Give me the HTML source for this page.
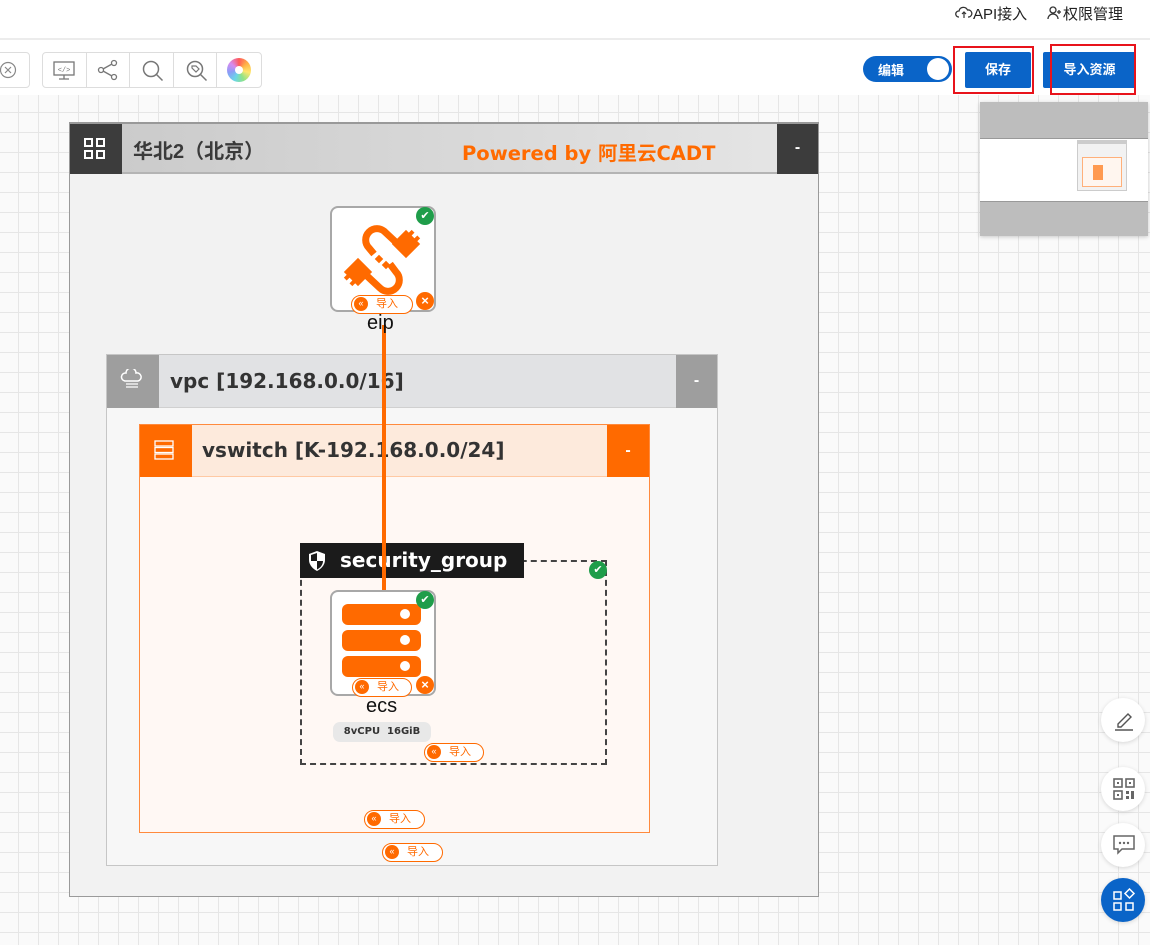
<!DOCTYPE html>
<html><head><meta charset="utf-8"><style>
*{box-sizing:border-box;margin:0;padding:0}
body{width:1150px;height:945px;overflow:hidden;position:relative;font-family:"Liberation Sans","Noto Sans CJK SC",sans-serif;background:#fff}
.abs{position:absolute}
.canvas{left:0;top:95px;width:1150px;height:850px;background-color:#fafafa;background-image:linear-gradient(#e6e6e6 1px,transparent 1px),linear-gradient(90deg,#e6e6e6 1px,transparent 1px);background-size:20px 20px;background-position:0 -3px,18px 0}
.vb{font-family:"DejaVu Sans","Noto Sans CJK SC",sans-serif;font-weight:bold}
.node{width:106px;height:106px;background:#fff;border:2px solid #a8a8a8;border-radius:8px}
.chk{width:18px;height:18px;border-radius:50%;background:#1f9d4a;color:#fff;font-size:11px;text-align:center;line-height:18px}
.xc{width:18px;height:18px;border-radius:50%;background:#ff6a00;color:#fff;font-size:13px;text-align:center;line-height:17px;font-weight:bold}
.pill{height:19px;border:1.5px solid #ff6a00;border-radius:10px;background:#fff;color:#ff6a00;font-size:11px;line-height:16px}
.pill i{position:absolute;left:2px;top:1px;width:14px;height:14px;border-radius:50%;background:#ff6a00;color:#fff;font-style:normal;font-size:9px;text-align:center;line-height:13px}
.pill span{position:absolute;left:24px;top:0}
.fb{width:44px;height:44px;border-radius:50%;background:#fff;box-shadow:0 1px 4px rgba(0,0,0,.15)}
.tb{width:44px;height:36px;border-right:1px solid #ddd}
</style></head><body>
<div class="abs" style="left:0;top:0;width:1150px;height:40px;background:#fff;border-bottom:2px solid #ececec"></div>
<div class="abs" style="left:955px;top:3px;font-size:15px;color:#222">
<svg width="18" height="14" viewBox="0 0 18 14" style="vertical-align:-1px"><path d="M4 11H3.5A3 3 0 0 1 4 5a4.5 4.5 0 0 1 8.5-1A3.5 3.5 0 0 1 14 11h-1" fill="none" stroke="#333" stroke-width="1.3"/><path d="M7 8l2-2 2 2M9 6v6" fill="none" stroke="#333" stroke-width="1.2"/></svg>API接入</div>
<div class="abs" style="left:1047px;top:3px;font-size:15px;color:#222">
<svg width="16" height="14" viewBox="0 0 16 14" style="vertical-align:-1px"><circle cx="6" cy="4" r="3" fill="none" stroke="#333" stroke-width="1.3"/><path d="M1 13a5 5 0 0 1 10 0M12 4v4M10 6h4" fill="none" stroke="#333" stroke-width="1.3"/></svg>权限管理</div>
<div class="abs" style="left:-10px;top:52px;width:40px;height:36px;border:1px solid #ddd;border-radius:4px"></div>
<svg class="abs" style="left:0;top:61px" width="18" height="18"><circle cx="8" cy="9" r="7.5" fill="none" stroke="#888" stroke-width="1.2"/><path d="M5 6l6 6M11 6l-6 6" stroke="#888" stroke-width="1.2"/></svg>
<div class="abs" style="left:42px;top:52px;width:220px;height:36px;border:1px solid #ddd;border-radius:4px;display:flex;overflow:hidden">
<div class="tb"></div><div class="tb"></div><div class="tb"></div><div class="tb"></div><div class="tb" style="border:0"></div></div>
<svg class="abs" style="left:52px;top:59px" width="24" height="22"><rect x="2" y="3" width="20" height="13" fill="none" stroke="#777" stroke-width="1.3"/><path d="M7 20h10M12 16v4" stroke="#777" stroke-width="1.3"/><text x="12" y="13" font-size="7" text-anchor="middle" fill="#777" font-family="Liberation Mono">&lt;/&gt;</text></svg>
<svg class="abs" style="left:97px;top:59px" width="22" height="22"><circle cx="17" cy="4" r="2.5" fill="none" stroke="#777" stroke-width="1.3"/><circle cx="4" cy="11" r="2.5" fill="none" stroke="#777" stroke-width="1.3"/><circle cx="17" cy="18" r="2.5" fill="none" stroke="#777" stroke-width="1.3"/><path d="M6 10l9-5M6 12l9 5" stroke="#777" stroke-width="1.3"/></svg>
<svg class="abs" style="left:141px;top:59px" width="24" height="24"><circle cx="10" cy="10" r="7.5" fill="none" stroke="#777" stroke-width="1.5"/><path d="M15.5 15.5l6 6" stroke="#777" stroke-width="1.5"/></svg>
<svg class="abs" style="left:185px;top:59px" width="24" height="24"><circle cx="10" cy="10" r="7.5" fill="none" stroke="#777" stroke-width="1.5"/><path d="M15.5 15.5l6 6" stroke="#777" stroke-width="1.5"/><path d="M7 7h4l3 3-3 3-4-4z" fill="none" stroke="#777" stroke-width="1.2"/></svg>
<div class="abs" style="left:227px;top:58px;width:24px;height:24px;border-radius:50%;background:conic-gradient(#ff5a5a,#ffb347,#ffe66d,#8fe388,#6ad5e8,#8b9cf7,#d78bf0,#ff5a5a)"></div>
<div class="abs" style="left:235px;top:66px;width:8px;height:8px;border-radius:50%;background:#fff"></div>
<div class="abs" style="left:863px;top:56px;width:89px;height:26px;border-radius:13px;background:#0a64c8"></div>
<div class="abs" style="left:927px;top:58px;width:22px;height:22px;border-radius:50%;background:#fff"></div>
<div class="abs" style="left:878px;top:60px;color:#fff;font-size:13px;font-weight:bold">编辑</div>
<div class="abs" style="left:953px;top:46px;width:81px;height:48px;border:2px solid #e8131b"></div>
<div class="abs" style="left:965px;top:52px;width:66px;height:36px;background:#0a64c8;border-radius:2px;color:#fff;font-size:13px;font-weight:bold;text-align:center;line-height:36px">保存</div>
<div class="abs" style="left:1043px;top:52px;width:93px;height:36px;background:#0a64c8;border-radius:2px;color:#fff;font-size:13px;font-weight:bold;text-align:center;line-height:36px">导入资源</div>
<div class="abs" style="left:1050px;top:44px;width:86px;height:51px;border:2px solid #e8131b"></div>
<div class="abs canvas"></div>
<div class="abs" style="left:980px;top:102px;width:168px;height:134px;background:#bdbdbd;box-shadow:0 1px 4px rgba(0,0,0,.2)"></div>
<div class="abs" style="left:980px;top:138px;width:168px;height:64px;background:#fff;border-top:1px solid #999;border-bottom:1px solid #999"></div>
<div class="abs" style="left:1077px;top:140px;width:50px;height:51px;background:#f2f2f2;border:1px solid #ccc"></div>
<div class="abs" style="left:1077px;top:140px;width:50px;height:4px;background:#ccc"></div>
<div class="abs" style="left:1082px;top:157px;width:40px;height:30px;border:1px solid #ffb07a;background:#fff6ef"></div>
<div class="abs" style="left:1093px;top:165px;width:10px;height:15px;background:#ff9a50"></div>
<!-- region -->
<div class="abs" style="left:69px;top:122px;width:750px;height:775px;background:#f2f2f2;border:1px solid #9a9a9a;border-top:2px solid #999"></div>
<div class="abs" style="left:70px;top:124px;width:748px;height:50px;background:linear-gradient(90deg,#c9c9c9,#e6e6e6);border-bottom:2px solid #b4b4b4"></div>
<div class="abs" style="left:70px;top:124px;width:52px;height:50px;background:#3c3c3c"></div>
<svg class="abs" style="left:84px;top:138px" width="22" height="22"><g fill="none" stroke="#fff" stroke-width="2"><rect x="1" y="1" width="7" height="7"/><rect x="13" y="1" width="7" height="7"/><rect x="1" y="13" width="7" height="7"/><rect x="13" y="13" width="7" height="7"/></g></svg>
<div class="abs" style="left:133px;top:135px;font-size:20px;font-weight:bold;color:#3a3a3a">华北2（北京）</div>
<div class="abs vb" style="left:462px;top:137px;font-size:19.5px;color:#ff6a00">Powered by 阿里云CADT</div>
<div class="abs" style="left:777px;top:124px;width:41px;height:50px;background:#3c3c3c;color:#fff;text-align:center;line-height:48px;font-size:16px;font-weight:bold">-</div>
<!-- vpc -->
<div class="abs" style="left:106px;top:354px;width:612px;height:512px;background:#f7f7f7;border:1px solid #c6c6c6"></div>
<div class="abs" style="left:107px;top:355px;width:610px;height:53px;background:#e1e2e4;border-bottom:1px solid #d0d0d0"></div>
<div class="abs" style="left:107px;top:355px;width:52px;height:53px;background:#9e9e9e"></div>
<svg class="abs" style="left:120px;top:369px" width="24" height="22"><path d="M5 12a4 4 0 0 1 1-8 5 5 0 0 1 10 0 4 4 0 0 1 2 8z" fill="none" stroke="#fff" stroke-width="1.5"/><path d="M6 15h12M6 18h12" stroke="#fff" stroke-width="1.3"/></svg>
<div class="abs vb" style="left:170px;top:369px;font-size:20px;color:#333">vpc [192.168.0.0/16]</div>
<div class="abs" style="left:676px;top:355px;width:41px;height:53px;background:#9e9e9e;color:#fff;text-align:center;line-height:52px;font-size:16px;font-weight:bold">-</div>
<!-- vswitch -->
<div class="abs" style="left:139px;top:424px;width:511px;height:409px;background:#fff8f4;border:1px solid #ff8a3d"></div>
<div class="abs" style="left:140px;top:425px;width:509px;height:52px;background:#fdeadc;border-bottom:1px solid #ffc9a3"></div>
<div class="abs" style="left:140px;top:425px;width:52px;height:52px;background:#ff6a00"></div>
<svg class="abs" style="left:153px;top:439px" width="22" height="22"><g fill="none" stroke="#fff" stroke-width="1.3"><rect x="2" y="2" width="18" height="5"/><rect x="2" y="8.5" width="18" height="5"/><rect x="2" y="15" width="18" height="5"/></g></svg>
<div class="abs vb" style="left:202px;top:438px;font-size:20px;color:#333">vswitch [K-192.168.0.0/24]</div>
<div class="abs" style="left:607px;top:425px;width:42px;height:52px;background:#ff6a00;color:#fff;text-align:center;line-height:52px;font-size:16px;font-weight:bold">-</div>
<!-- security group -->
<div class="abs" style="left:300px;top:560px;width:307px;height:205px;border:2px dashed #444"></div>
<div class="abs" style="left:300px;top:543px;width:224px;height:35px;background:#1b1b1b"></div>
<svg class="abs" style="left:307px;top:550px" width="20" height="22"><path d="M10 1L2 4v6c0 5 4 9 8 11 4-2 8-6 8-11V4z" fill="#fff"/><path d="M10 3v8H4V5zM10 11h6c0 4-3 7-6 8.5z" fill="#1b1b1b"/></svg>
<div class="abs vb" style="left:340px;top:548px;font-size:20px;color:#fff">security_group</div>
<div class="abs chk" style="left:589px;top:561px">✔</div>
<div class="abs" style="left:382px;top:325px;width:4px;height:266px;background:#ff6a00"></div>
<!-- eip -->
<div class="abs node" style="left:330px;top:206px"></div>
<svg class="abs" style="left:340px;top:220px" width="86" height="80" viewBox="0 0 86 80"><g fill="none" stroke="#ff6a00" stroke-width="7"><path d="M60 26 L45 12 A11 11 0 0 0 29 28 L34 34"/><path d="M50 44 L56 52 A11 11 0 0 1 40 68 L26 55"/></g><g fill="#ff6a00"><g transform="rotate(45 66 24)"><rect x="56" y="14" width="20" height="20"/><rect x="60" y="10" width="4" height="5"/><rect x="68" y="10" width="4" height="5"/></g><g transform="rotate(45 18 52)"><rect x="8" y="42" width="20" height="20"/><rect x="12" y="61" width="4" height="5"/><rect x="20" y="61" width="4" height="5"/></g><rect x="36" y="36" width="6" height="6" transform="rotate(45 39 39)"/><rect x="43" y="42" width="6" height="6" transform="rotate(45 46 45)"/></g></svg>
<div class="abs chk" style="left:416px;top:207px">✔</div>
<div class="abs pill" style="left:351px;top:295px;width:62px"><i>«</i><span>导入</span></div>
<div class="abs xc" style="left:416px;top:292px">×</div>
<div class="abs" style="left:367px;top:312px;font-size:20px;color:#111">eip</div>
<!-- ecs -->
<div class="abs node" style="left:330px;top:590px"></div>
<div class="abs" style="left:342px;top:604px;width:79px;height:21px;background:#ff6a00;border-radius:6px"></div>
<div class="abs" style="left:342px;top:630px;width:79px;height:21px;background:#ff6a00;border-radius:6px"></div>
<div class="abs" style="left:342px;top:656px;width:79px;height:21px;background:#ff6a00;border-radius:6px"></div>
<div class="abs" style="left:400px;top:609px;width:10px;height:10px;border-radius:50%;background:#fff"></div>
<div class="abs" style="left:400px;top:635px;width:10px;height:10px;border-radius:50%;background:#fff"></div>
<div class="abs" style="left:400px;top:661px;width:10px;height:10px;border-radius:50%;background:#fff"></div>
<div class="abs chk" style="left:416px;top:591px">✔</div>
<div class="abs pill" style="left:352px;top:678px;width:60px"><i>«</i><span>导入</span></div>
<div class="abs xc" style="left:416px;top:676px">×</div>
<div class="abs" style="left:366px;top:695px;font-size:20px;color:#111">ecs</div>
<div class="abs vb" style="left:333px;top:722px;width:98px;height:20px;background:#e8e8e8;border-radius:7px;font-size:10px;color:#333;text-align:center;line-height:20px">8vCPU&nbsp; 16GiB</div>
<div class="abs pill" style="left:424px;top:743px;width:60px"><i>«</i><span>导入</span></div>
<div class="abs pill" style="left:364px;top:810px;width:61px"><i>«</i><span>导入</span></div>
<div class="abs pill" style="left:382px;top:843px;width:61px"><i>«</i><span>导入</span></div>
<!-- float buttons -->
<div class="abs fb" style="left:1101px;top:698px"></div>
<svg class="abs" style="left:1112px;top:708px" width="24" height="24"><path d="M6 16l10-10 3 3-10 10H6z" fill="none" stroke="#555" stroke-width="1.4"/><path d="M3 22h18" stroke="#555" stroke-width="1.4"/></svg>
<div class="abs fb" style="left:1101px;top:767px"></div>
<svg class="abs" style="left:1113px;top:778px" width="22" height="22"><g fill="none" stroke="#666" stroke-width="1.6"><rect x="1" y="1" width="8" height="8"/><rect x="13" y="1" width="8" height="8"/><rect x="1" y="13" width="8" height="8"/></g><g fill="#666"><rect x="4" y="4" width="2" height="2"/><rect x="16" y="4" width="2" height="2"/><rect x="4" y="16" width="2" height="2"/><rect x="13" y="13" width="3" height="3"/><rect x="18" y="13" width="3" height="8"/><rect x="13" y="18" width="3" height="3"/></g></svg>
<div class="abs fb" style="left:1101px;top:823px"></div>
<svg class="abs" style="left:1112px;top:834px" width="24" height="22"><path d="M2 2h20v13H10l-4 4v-4H2z" fill="none" stroke="#666" stroke-width="1.5"/><g fill="#666"><circle cx="8" cy="9" r="1.2"/><circle cx="12" cy="9" r="1.2"/><circle cx="16" cy="9" r="1.2"/></g></svg>
<div class="abs fb" style="left:1101px;top:878px;background:#0a64c8"></div>
<svg class="abs" style="left:1112px;top:888px" width="24" height="24"><g fill="none" stroke="#fff" stroke-width="1.5"><rect x="2" y="4" width="7" height="7"/><rect x="2" y="15" width="7" height="7"/><rect x="14" y="15" width="7" height="7"/><path d="M17.5 1l4.5 4.5-4.5 4.5-4.5-4.5z"/></g></svg>
</body></html>
